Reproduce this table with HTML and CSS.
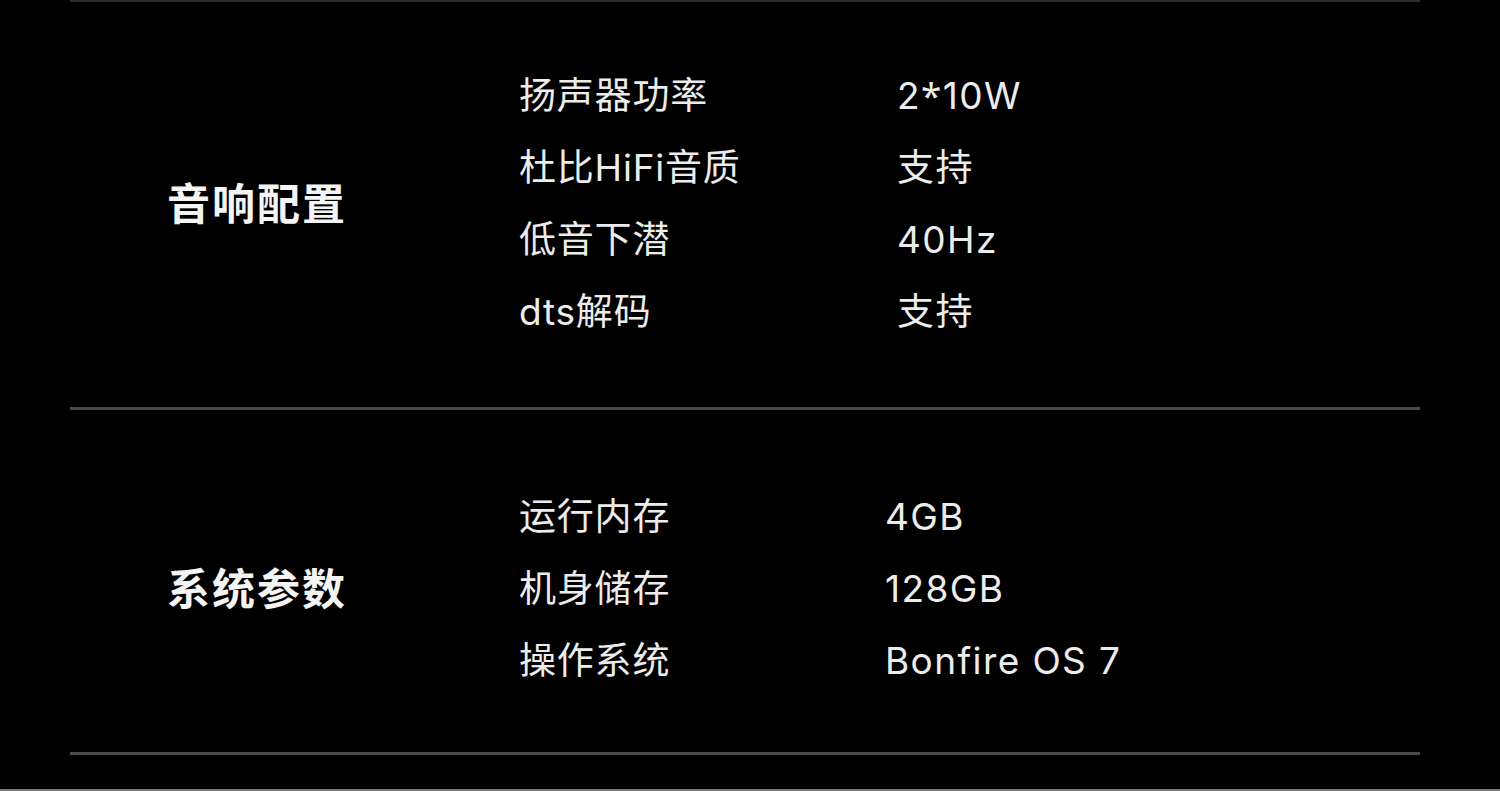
FILE: index.html
```html
<!DOCTYPE html>
<html lang="zh-CN">
<head>
<meta charset="utf-8">
<title>规格参数</title>
<link rel="stylesheet" href="styles.css">
</head>
<body>
<div class="page">
  <div class="rule-top"></div>
  <section class="spec spec-audio">
    <h2 class="spec-title">音响配置</h2>
    <dl class="spec-list">
      <div class="spec-row"><dt>扬声器功率</dt><dd>2<span class="star">*</span>10W</dd></div>
      <div class="spec-row"><dt>杜比HiFi音质</dt><dd>支持</dd></div>
      <div class="spec-row"><dt>低音下潜</dt><dd>40Hz</dd></div>
      <div class="spec-row"><dt>dts解码</dt><dd>支持</dd></div>
    </dl>
  </section>
  <section class="spec spec-system">
    <h2 class="spec-title">系统参数</h2>
    <dl class="spec-list">
      <div class="spec-row"><dt>运行内存</dt><dd>4GB</dd></div>
      <div class="spec-row"><dt>机身储存</dt><dd>128GB</dd></div>
      <div class="spec-row"><dt>操作系统</dt><dd>Bonfire OS 7</dd></div>
    </dl>
  </section>
  <div class="footer-rule"></div>
</div>
</body>
</html>
```

FILE: styles.css
```css
html, body {
  margin: 0;
  padding: 0;
  background: #000;
}
body {
  width: 1500px;
  height: 791px;
  overflow: hidden;
  font-family: "Inter", "Noto Sans CJK SC", "Noto Sans", sans-serif;
  color: #ececec;
}
.page {
  display: flex;
  flex-direction: column;
  height: 791px;
}
.rule-top {
  margin: 0 80px 0 70px;
  height: 2px;
  background: #2e2e2e;
}
.spec {
  margin: 0 80px 0 70px;
  display: flex;
  align-items: center;
  border-bottom: 3px solid #4a4a4a;
}
.spec-audio {
  padding: 57px 0 60px;
}
.spec-system {
  padding: 70px 0 56px;
}
.spec-title {
  margin: 0 0 4px;
  width: 352px;
  padding-left: 97px;
  font-family: "Noto Sans CJK SC", sans-serif;
  font-size: 43px;
  font-weight: 700;
  color: #f4f4f4;
  line-height: 1;
  letter-spacing: 2px;
}
.spec-list {
  margin: 0;
  display: flex;
  flex-direction: column;
}
.spec-row {
  display: flex;
  align-items: center;
  height: 72px;
  font-size: 37px;
  line-height: 1;
  letter-spacing: 0.8px;
}
.spec-row dt,
.spec-row dd {
  margin: 0;
}
.spec-row dd {
  letter-spacing: 1.4px;
}
.star {
  font-family: "Noto Sans", sans-serif;
}
.spec-audio .spec-row dt {
  width: 378px;
}
.spec-system .spec-row dt {
  width: 366px;
}
.footer-rule {
  margin-top: auto;
  height: 2px;
  background: #7a7a7a;
}
```
